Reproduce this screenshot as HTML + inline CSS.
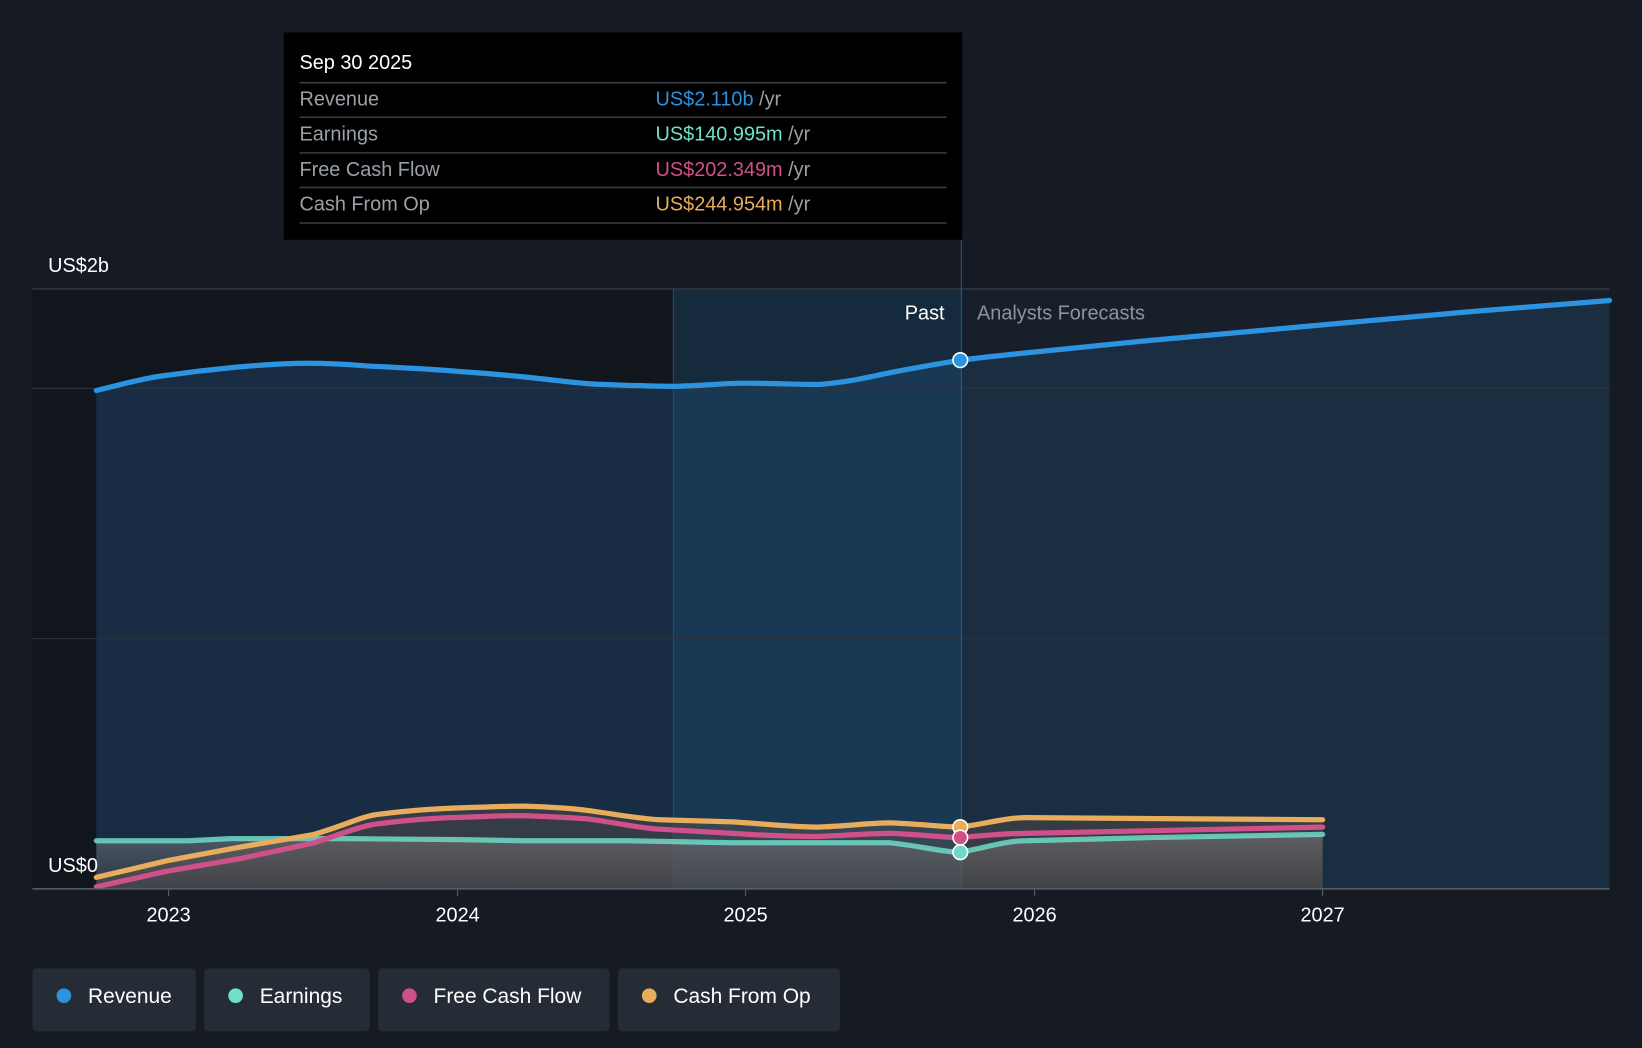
<!DOCTYPE html>
<html><head><style>
html,body{margin:0;padding:0;background:#151a23;}
svg{display:block;font-family:"Liberation Sans",Arial,sans-serif;}
</style></head><body>
<svg width="1642" height="1048" viewBox="0 0 1568 1001" preserveAspectRatio="none">
<defs>
<linearGradient id="g1" x1="0" y1="0" x2="0" y2="1"><stop offset="0" stop-color="#7a7f88" stop-opacity="0.55"/><stop offset="1" stop-color="#3a3f48" stop-opacity="0.5"/></linearGradient>
</defs>
<rect width="1568" height="1001" fill="#151a23"/>
<rect x="31" y="276" width="612" height="573" fill="#11151c"/>
<path d="M92,373 C120,366 140,361 155,359 C190,354 250,347 295,347 C330,347 350,350 360,350 C400,352 420,353 440,355 C470,357 480,358 500,360 C530,363 550,366 570,367 C600,368 620,369 645,369 C680,368 690,366 710,366 C750,366 770,368 785,367 C810,365 830,360 850,356 C880,350 900,347 917,344 C950,340 970,338 1000,335 L1100,325 L1200,316 L1300,307 L1400,298 L1537,287 L1537,849 L92,849 Z" fill="#1b3550" fill-opacity="0.75"/>
<rect x="643" y="276" width="275" height="573" fill="#1a4a72" fill-opacity="0.35"/>
<rect x="918" y="276" width="619" height="573" fill="#1c2a3c" fill-opacity="0.35"/>
<g stroke="#2c3440" stroke-width="1">
<line x1="31" y1="276" x2="1537" y2="276" stroke="#3a414c"/>
<line x1="31" y1="371" x2="1537" y2="371"/>
<line x1="31" y1="610" x2="1537" y2="610"/>
</g>
<line x1="643" y1="276" x2="643" y2="849" stroke="#2a4a66"/>
<line x1="918" y1="229" x2="918" y2="849" stroke="#2e5a80"/>
<path d="M92,803 L180,803 L220,801 L300,801 L330,801 L440,802 L500,803 L600,803 L700,805 L850,805 C880,808 900,814 917,814 C940,810 960,803 980,803 L1100,800 L1263,797 L1263,849 L92,849 Z" fill="url(#g1)"/>
<path d="M92,838 L160,822 L230,809 L300,797 C330,788 345,780 360,778 C390,774 410,773 430,772 C460,771 480,770 500,770 C530,771 545,772 560,774 C590,778 610,782 630,783 L700,785 C730,787 760,790 780,790 C810,789 830,786 850,786 C880,787 900,790 917,790 C940,787 960,781 980,781 L1263,783 L1263,849 L92,849 Z" fill="#8a6a50" fill-opacity="0.25"/>
<g fill="none" stroke-width="5" stroke-linecap="round" stroke-linejoin="round">
<path d="M92,803 L180,803 L220,801 L300,801 L330,801 L440,802 L500,803 L600,803 L700,805 L850,805 C880,808 900,814 917,814 C940,810 960,803 980,803 L1100,800 L1263,797" stroke="#6fd9c7" stroke-opacity="0.85"/>
<path d="M92,847 L160,832 L230,820 L300,805 C330,795 345,789 360,787 C390,783 410,782 430,781 C460,780 480,779 500,779 C530,780 545,781 560,782 C590,786 610,791 630,792 L700,796 C730,798 760,799 780,799 C810,798 830,796 850,796 C880,797 900,800 917,800 C940,798 960,796 980,796 L1263,790" stroke="#d0508a"/>
<path d="M92,838 L160,822 L230,809 L300,797 C330,788 345,780 360,778 C390,774 410,773 430,772 C460,771 480,770 500,770 C530,771 545,772 560,774 C590,778 610,782 630,783 L700,785 C730,787 760,790 780,790 C810,789 830,786 850,786 C880,787 900,790 917,790 C940,787 960,781 980,781 L1263,783" stroke="#e8ad5c"/>
<path d="M92,373 C120,366 140,361 155,359 C190,354 250,347 295,347 C330,347 350,350 360,350 C400,352 420,353 440,355 C470,357 480,358 500,360 C530,363 550,366 570,367 C600,368 620,369 645,369 C680,368 690,366 710,366 C750,366 770,368 785,367 C810,365 830,360 850,356 C880,350 900,347 917,344 C950,340 970,338 1000,335 L1100,325 L1200,316 L1300,307 L1400,298 L1537,287" stroke="#2b93e0"/>
</g>
<g stroke="#fff" stroke-width="1.5">
<circle cx="917" cy="344" r="7" fill="#2b93e0"/>
<circle cx="917" cy="790" r="7" fill="#e8ad5c"/>
<circle cx="917" cy="800" r="7" fill="#d0508a"/>
<circle cx="917" cy="814" r="7" fill="#6fd9c7"/>
</g>
<line x1="31" y1="849" x2="1537" y2="849" stroke="#5a616c" stroke-width="1.5"/>
<g stroke="#5a616c"><line x1="161" y1="849" x2="161" y2="856"/><line x1="437" y1="849" x2="437" y2="856"/><line x1="712" y1="849" x2="712" y2="856"/><line x1="988" y1="849" x2="988" y2="856"/><line x1="1263" y1="849" x2="1263" y2="856"/></g>
<g fill="#fff" font-size="19" text-anchor="middle">
<text x="161" y="880">2023</text><text x="437" y="880">2024</text><text x="712" y="880">2025</text><text x="988" y="880">2026</text><text x="1263" y="880">2027</text>
</g>
<text x="46" y="260" fill="#fff" font-size="19">US$2b</text>
<text x="46" y="833" fill="#fff" font-size="19">US$0</text>
<text x="902" y="305" fill="#fff" font-size="19" text-anchor="end">Past</text>
<text x="933" y="305" fill="#8d939c" font-size="19">Analysts Forecasts</text>
<rect x="271" y="31" width="648" height="198" fill="#000"/>
<text x="286" y="66" fill="#fff" font-size="19">Sep 30 2025</text>
<g stroke="#3a3d42" stroke-width="1.5"><line x1="286" y1="79" x2="904" y2="79"/><line x1="286" y1="112" x2="904" y2="112"/><line x1="286" y1="146" x2="904" y2="146"/><line x1="286" y1="179" x2="904" y2="179"/><line x1="286" y1="213" x2="904" y2="213"/></g>
<g font-size="19" fill="#9aa0a8">
<text x="286" y="101">Revenue</text><text x="286" y="134">Earnings</text><text x="286" y="168">Free Cash Flow</text><text x="286" y="201">Cash From Op</text>
</g>
<g font-size="19">
<text x="626" y="101"><tspan fill="#2b93e0">US$2.110b</tspan><tspan fill="#9aa0a8"> /yr</tspan></text>
<text x="626" y="134"><tspan fill="#6fe0cc">US$140.995m</tspan><tspan fill="#9aa0a8"> /yr</tspan></text>
<text x="626" y="168"><tspan fill="#d0508a">US$202.349m</tspan><tspan fill="#9aa0a8"> /yr</tspan></text>
<text x="626" y="201"><tspan fill="#e8ad5c">US$244.954m</tspan><tspan fill="#9aa0a8"> /yr</tspan></text>
</g>
<g fill="#262c36">
<rect x="31" y="925" width="156" height="60" rx="4"/><rect x="195" y="925" width="158" height="60" rx="4"/><rect x="361" y="925" width="221" height="60" rx="4"/><rect x="590" y="925" width="212" height="60" rx="4"/>
</g>
<circle cx="61" cy="951" r="7" fill="#2b93e0"/><circle cx="225" cy="951" r="7" fill="#6fe0cc"/><circle cx="391" cy="951" r="7" fill="#d0508a"/><circle cx="620" cy="951" r="7" fill="#e8ad5c"/>
<g fill="#fff" font-size="20">
<text x="84" y="958">Revenue</text><text x="248" y="958">Earnings</text><text x="414" y="958">Free Cash Flow</text><text x="643" y="958">Cash From Op</text>
</g>
</svg>
</body></html>
